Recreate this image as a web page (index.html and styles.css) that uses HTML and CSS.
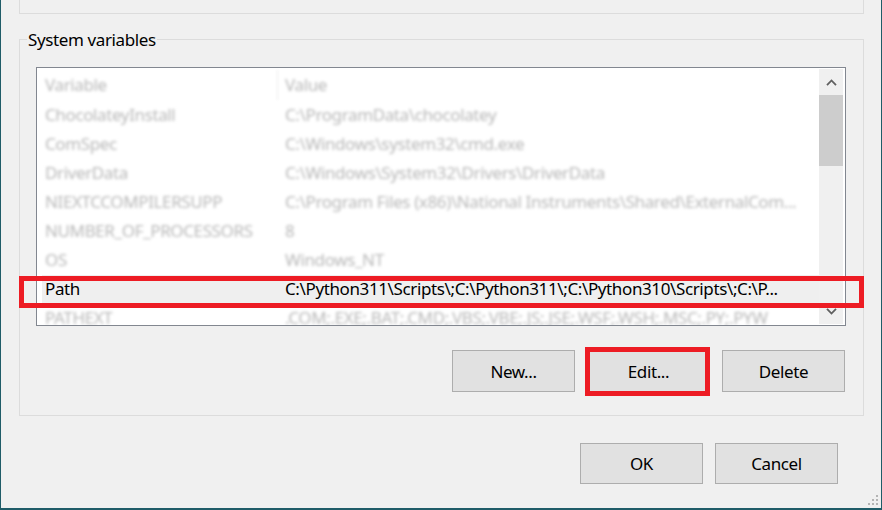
FILE: index.html
```html
<!DOCTYPE html>
<html>
<head>
<meta charset="utf-8">
<link rel="stylesheet" href="styles.css">
</head>
<body>
<div class="window">
  <div class="prev-group"></div>
  <div class="group">
    <div class="legend">System variables</div>
    <div class="list">
      <div class="table">
        <div class="row head blur"><div class="c1">Variable</div><div class="c2">Value</div></div>
        <div class="row blur"><div class="c1">ChocolateyInstall</div><div class="c2">C:\ProgramData\chocolatey</div></div>
        <div class="row blur"><div class="c1">ComSpec</div><div class="c2">C:\Windows\system32\cmd.exe</div></div>
        <div class="row blur"><div class="c1">DriverData</div><div class="c2">C:\Windows\System32\Drivers\DriverData</div></div>
        <div class="row blur"><div class="c1">NIEXTCCOMPILERSUPP</div><div class="c2">C:\Program Files (x86)\National Instruments\Shared\ExternalCom...</div></div>
        <div class="row blur"><div class="c1">NUMBER_OF_PROCESSORS</div><div class="c2">8</div></div>
        <div class="row blur"><div class="c1">OS</div><div class="c2">Windows_NT</div></div>
        <div class="row sel"><div class="c1">Path</div><div class="c2">C:\Python311\Scripts\;C:\Python311\;C:\Python310\Scripts\;C:\P...</div></div>
        <div class="row blur"><div class="c1">PATHEXT</div><div class="c2">.COM;.EXE;.BAT;.CMD;.VBS;.VBE;.JS;.JSE;.WSF;.WSH;.MSC;.PY;.PYW</div></div>
      </div>
      <div class="scrollbar">
        <div class="sb-btn"><svg width="11" height="7" viewBox="0 0 11 7"><polyline points="1,6.2 5.5,1.5 10,6.2" fill="none" stroke="#606060" stroke-width="1.8"/></svg></div>
        <div class="sb-thumb"></div>
        <div class="sb-track"></div>
        <div class="sb-btn"><svg width="11" height="7" viewBox="0 0 11 7"><polyline points="1,0.8 5.5,5.5 10,0.8" fill="none" stroke="#606060" stroke-width="1.8"/></svg></div>
      </div>
    </div>
    <div class="btnrow">
      <button class="btn">New...</button>
      <button class="btn">Edit...</button>
      <button class="btn">Delete</button>
    </div>
  </div>
  <div class="dlg-btns">
    <button class="btn btn-dlg">OK</button>
    <button class="btn btn-dlg">Cancel</button>
  </div>
  <div class="mark mark-path"></div>
  <div class="mark mark-edit"></div>
  <svg class="grip" width="12" height="12" viewBox="0 0 12 12">
    <rect x="9" y="1" width="2" height="2"/>
    <rect x="5" y="5" width="2" height="2"/>
    <rect x="9" y="5" width="2" height="2"/>
    <rect x="1" y="9" width="2" height="2"/>
    <rect x="5" y="9" width="2" height="2"/>
    <rect x="9" y="9" width="2" height="2"/>
  </svg>
</div>
</body>
</html>
```
FILE: styles.css
```css
* { box-sizing: border-box; }
html, body { margin: 0; padding: 0; }
body {
  width: 882px;
  height: 510px;
  overflow: hidden;
  background: #f0f0f0;
  font-family: "Noto Sans", "Open Sans", sans-serif;
  font-size: 17px;
  letter-spacing: -0.38px;
  color: #000;
}
.window {
  position: relative;
  width: 882px;
  height: 510px;
  border-left: 1px solid #1f5c68;
  border-right: 1px solid #1f5c68;
  border-bottom: 2px solid #1f5c68;
  padding-left: 18px;
}
.prev-group {
  width: 845px;
  height: 14px;
  border: 1px solid #dcdcdc;
  border-top: none;
}
.group {
  width: 845px;
  height: 377px;
  margin-top: 25px;
  border: 1px solid #dcdcdc;
  padding: 0 17px 0 16px;
}
.legend {
  width: fit-content;
  margin: -11px 0 0 -9px;
  padding: 0 1px;
  height: 22px;
  line-height: 22px;
  background: #f0f0f0;
  white-space: nowrap;
}
.list {
  width: 810px;
  height: 259px;
  margin-top: 16px;
  border: 1px solid #828790;
  background: #fff;
  display: flex;
  overflow: hidden;
}
.table {
  width: 782px;
  flex: none;
  overflow: hidden;
}
.row {
  display: flex;
  align-items: center;
  height: 29px;
  margin-left: 5px;
  line-height: 20px;
  white-space: nowrap;
  padding-bottom: 1px;
}
.row.head {
  height: 33px;
  padding-top: 2px;
}
.c1 {
  width: 236px;
  flex: none;
  padding-left: 3px;
  border-right: 1px solid transparent;
  align-self: stretch;
  display: flex;
  align-items: center;
}
.head .c1 { border-right-color: #ececec; }
.c2 {
  padding-left: 7px;
}
.blur {
  color: #b8b8b8;
  filter: blur(1.4px);
}
.sel { background: #efefef; }
.scrollbar {
  width: 24px;
  flex: none;
  margin: 1px 2px 1px 0;
  background: #f0f0f0;
  display: flex;
  flex-direction: column;
}
.sb-btn {
  height: 26px;
  display: flex;
  align-items: center;
  justify-content: center;
}
.sb-btn svg { display: block; }
.sb-thumb {
  height: 71px;
  background: #cdcdcd;
}
.sb-track { flex: 1; }
.btnrow {
  display: flex;
  justify-content: flex-end;
  gap: 12px;
  margin-top: 24px;
  padding-right: 1px;
}
.btn {
  width: 123px;
  height: 42px;
  padding: 0;
  margin: 0;
  background: #e1e1e1;
  border: 1px solid #adadad;
  font: inherit;
  letter-spacing: inherit;
  color: #000;
}
.dlg-btns {
  display: flex;
  justify-content: flex-end;
  gap: 12px;
  margin-top: 27px;
  padding-right: 43px;
}
.btn-dlg { height: 41px; }
.mark {
  position: absolute;
  border: 5px solid #ed1c24;
}
.mark-path { left: 18px; top: 276px; width: 845px; height: 32px; }
.mark-edit { left: 584px; top: 347px; width: 125px; height: 49px; }
.grip {
  position: absolute;
  right: 2px;
  bottom: 2px;
  fill: #b4b4b4;
}
```
